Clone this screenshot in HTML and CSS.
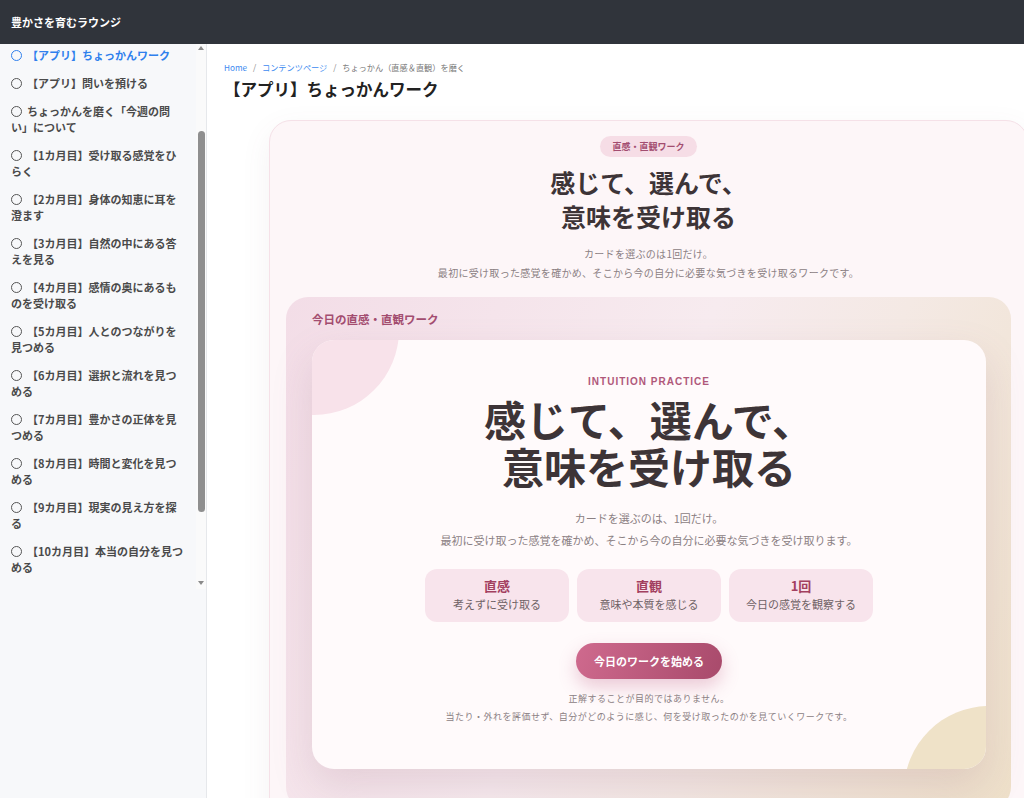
FILE: index.html
```html
<!DOCTYPE html>
<html lang="ja">
<head>
  <meta charset="UTF-8">
  <meta name="viewport" content="width=device-width, initial-scale=1.0">
  <title>【アプリ】ちょっかんワーク</title>
  <link rel="stylesheet" href="styles.css">
</head>
<body>
  <header class="topbar">
    <span class="site-name">豊かさを育むラウンジ</span>
  </header>

  <div class="layout">
    <aside class="sidebar">
      <div class="sidebar-scroll">
        <ul class="nav-list">
          <li class="nav-item active"><span class="dot"></span>【アプリ】ちょっかんワーク</li>
          <li class="nav-item"><span class="dot"></span>【アプリ】問いを預ける</li>
          <li class="nav-item"><span class="dot"></span>ちょっかんを磨く「今週の問い」について</li>
          <li class="nav-item"><span class="dot"></span>【1カ月目】受け取る感覚をひらく</li>
          <li class="nav-item"><span class="dot"></span>【2カ月目】身体の知恵に耳を澄ます</li>
          <li class="nav-item"><span class="dot"></span>【3カ月目】自然の中にある答えを見る</li>
          <li class="nav-item"><span class="dot"></span>【4カ月目】感情の奥にあるものを受け取る</li>
          <li class="nav-item"><span class="dot"></span>【5カ月目】人とのつながりを見つめる</li>
          <li class="nav-item"><span class="dot"></span>【6カ月目】選択と流れを見つめる</li>
          <li class="nav-item"><span class="dot"></span>【7カ月目】豊かさの正体を見つめる</li>
          <li class="nav-item"><span class="dot"></span>【8カ月目】時間と変化を見つめる</li>
          <li class="nav-item"><span class="dot"></span>【9カ月目】現実の見え方を探る</li>
          <li class="nav-item"><span class="dot"></span>【10カ月目】本当の自分を見つめる</li>
        </ul>
        <div class="scroll-track">
          <span class="arrow up"></span>
          <span class="thumb"></span>
          <span class="arrow down"></span>
        </div>
      </div>
    </aside>

    <main class="main">
      <nav class="breadcrumb">
        <a href="#">Home</a>
        <span class="sep">/</span>
        <a href="#">コンテンツページ</a>
        <span class="sep">/</span>
        <span class="current">ちょっかん（直感＆直観）を磨く</span>
      </nav>
      <h1 class="page-title">【アプリ】ちょっかんワーク</h1>

      <section class="work-card">
        <div class="intro">
          <span class="badge">直感・直観ワーク</span>
          <h2 class="intro-title">感じて、選んで、<br>意味を受け取る</h2>
          <p class="intro-text">カードを選ぶのは1回だけ。<br>最初に受け取った感覚を確かめ、そこから今の自分に必要な気づきを受け取るワークです。</p>
        </div>

        <div class="today">
          <div class="today-label">今日の直感・直観ワーク</div>

          <div class="practice">
            <div class="eyebrow">INTUITION PRACTICE</div>
            <h3 class="practice-title">感じて、選んで、<br>意味を受け取る</h3>
            <p class="practice-text">カードを選ぶのは、1回だけ。<br>最初に受け取った感覚を確かめ、そこから今の自分に必要な気づきを受け取ります。</p>

            <div class="points">
              <div class="point">
                <strong>直感</strong>
                <span>考えずに受け取る</span>
              </div>
              <div class="point">
                <strong>直観</strong>
                <span>意味や本質を感じる</span>
              </div>
              <div class="point">
                <strong>1回</strong>
                <span>今日の感覚を観察する</span>
              </div>
            </div>

            <button class="start-btn">今日のワークを始める</button>

            <p class="note">正解することが目的ではありません。<br>当たり・外れを評価せず、自分がどのように感じ、何を受け取ったのかを見ていくワークです。</p>
          </div>
        </div>
      </section>
    </main>
  </div>
</body>
</html>
```

FILE: styles.css
```css
body {
  margin: 0;
  font-family: "Noto Sans CJK JP", "Noto Sans", sans-serif;
  color: #333;
  background-color: #fff;
  height: 798px;
  overflow: hidden;
}

ul {
  margin: 0;
  padding: 0;
  list-style: none;
}

/* ヘッダー */
.topbar {
  height: 44px;
  display: flex;
  align-items: center;
  padding: 0 11px;
  background-color: #30343b;
}

.site-name {
  color: #fff;
  font-size: 11px;
  font-weight: bold;
}

.layout {
  display: flex;
  height: 754px;
}

/* サイドバー */
.sidebar {
  width: 206px;
  flex-shrink: 0;
  background-color: #f7f8fa;
  border-right: 1px solid #e6e8eb;
}

.sidebar-scroll {
  display: flex;
  height: 545px;
}

.nav-list {
  flex: 1;
  min-width: 0;
  overflow: hidden;
  padding: 0 12px 0 11px;
}

.nav-item {
  padding: 3px 0 9px;
  font-size: 11px;
  line-height: 16px;
  font-weight: bold;
  color: #4a4a4a;
  cursor: pointer;
}

.nav-item .dot {
  display: inline-block;
  width: 9px;
  height: 9px;
  border: 1.3px solid #555;
  border-radius: 50%;
  margin-right: 5px;
  vertical-align: -1px;
}

.nav-item.active {
  color: #2f80ed;
}

.nav-item.active .dot {
  border-color: #2f80ed;
}

/* スクロールバー */
.scroll-track {
  width: 10px;
  flex-shrink: 0;
  display: flex;
  flex-direction: column;
  align-items: center;
  background-color: #fafafa;
}

.arrow {
  width: 0;
  height: 0;
  border-left: 3px solid transparent;
  border-right: 3px solid transparent;
}

.arrow.up {
  margin-top: 2px;
  border-bottom: 4px solid #8a8a8a;
}

.arrow.down {
  margin-top: auto;
  margin-bottom: 4px;
  border-top: 4px solid #8a8a8a;
}

.thumb {
  width: 7px;
  height: 381px;
  margin-top: 81px;
  border-radius: 4px;
  background-color: #8f8f8f;
}

/* メイン */
.main {
  flex: 1;
  min-width: 0;
  padding: 17px 17px 0;
  overflow: hidden;
}

.breadcrumb {
  font-size: 8.2px;
  line-height: 12px;
  color: #777;
}

.breadcrumb a {
  color: #3d8af0;
  text-decoration: none;
}

.breadcrumb .sep {
  margin: 0 4px;
  color: #888;
}

.page-title {
  margin: 4px 0 0;
  font-size: 16.5px;
  line-height: 24px;
  font-weight: bold;
  color: #222;
}

/* ワークカード */
.work-card {
  width: 759px;
  margin: 19px 0 0 45px;
  padding: 15px 16px 30px;
  box-sizing: border-box;
  background-color: #fdf6f8;
  border: 1px solid #f5e1e8;
  border-radius: 22px;
  box-shadow: 0 10px 30px rgba(120, 90, 100, 0.08);
  text-align: center;
}

.intro {
  display: flex;
  flex-direction: column;
  align-items: center;
}

.badge {
  height: 21px;
  line-height: 21px;
  padding: 0 12px;
  border-radius: 11px;
  background-color: #f6dde6;
  color: #a34d70;
  font-size: 9px;
  font-weight: bold;
}

.intro-title {
  margin: 8px 0 0;
  font-size: 25px;
  line-height: 34px;
  font-weight: bold;
  color: #3d3437;
}

.intro-text {
  margin: 11px 0 0;
  font-size: 10px;
  line-height: 19px;
  letter-spacing: 0.3px;
  color: #8b8083;
}

.today {
  margin-top: 15px;
  padding: 15px 25px 40px 26px;
  border-radius: 22px;
  background: linear-gradient(115deg, #f3dde7 0%, #f7ebef 45%, #f4e9e4 65%, #eee0c9 100%);
  text-align: left;
}

.today-label {
  font-size: 11.5px;
  line-height: 14px;
  font-weight: bold;
  color: #a34d70;
}

.practice {
  position: relative;
  overflow: hidden;
  margin-top: 14px;
  padding: 36px 20px 43px;
  border-radius: 22px;
  background-color: #fffafb;
  box-shadow: 0 18px 40px rgba(150, 100, 120, 0.18);
  text-align: center;
}

.practice::before {
  content: "";
  position: absolute;
  left: -83px;
  top: -95px;
  width: 170px;
  height: 170px;
  border-radius: 50%;
  background-color: #f8e2ea;
}

.practice::after {
  content: "";
  position: absolute;
  right: -88px;
  bottom: -107px;
  width: 170px;
  height: 170px;
  border-radius: 50%;
  background-color: #efe2c8;
}

.practice > * {
  position: relative;
  z-index: 1;
}

.eyebrow {
  font-family: "Liberation Sans", Arial, sans-serif;
  font-size: 10px;
  line-height: 12px;
  font-weight: bold;
  letter-spacing: 1px;
  color: #b0587a;
}

.practice-title {
  margin: 7px 0 0;
  font-size: 42px;
  line-height: 47px;
  font-weight: bold;
  color: #3d3437;
}

.practice-text {
  margin: 18px 0 0;
  font-size: 11px;
  line-height: 22px;
  color: #8b8083;
}

.points {
  display: flex;
  justify-content: center;
  gap: 8px;
  margin-top: 18px;
}

.point {
  width: 144px;
  height: 53px;
  box-sizing: border-box;
  padding-top: 8px;
  border-radius: 12px;
  background-color: #f8e4ec;
  display: flex;
  flex-direction: column;
  align-items: center;
}

.point strong {
  font-size: 13px;
  line-height: 18px;
  color: #a3405f;
}

.point span {
  font-size: 11px;
  line-height: 18px;
  color: #6f6265;
}

.start-btn {
  display: block;
  margin: 21px auto 0;
  width: 146px;
  height: 36px;
  border: none;
  border-radius: 18px;
  background: linear-gradient(110deg, #cf6a8e 0%, #a84a6b 100%);
  box-shadow: 0 8px 18px rgba(190, 90, 130, 0.3);
  color: #fff;
  font-family: inherit;
  font-size: 11px;
  font-weight: bold;
  cursor: pointer;
}

.note {
  margin: 11px 0 0;
  font-size: 9px;
  line-height: 18px;
  letter-spacing: 0.5px;
  color: #8b8083;
}
```
